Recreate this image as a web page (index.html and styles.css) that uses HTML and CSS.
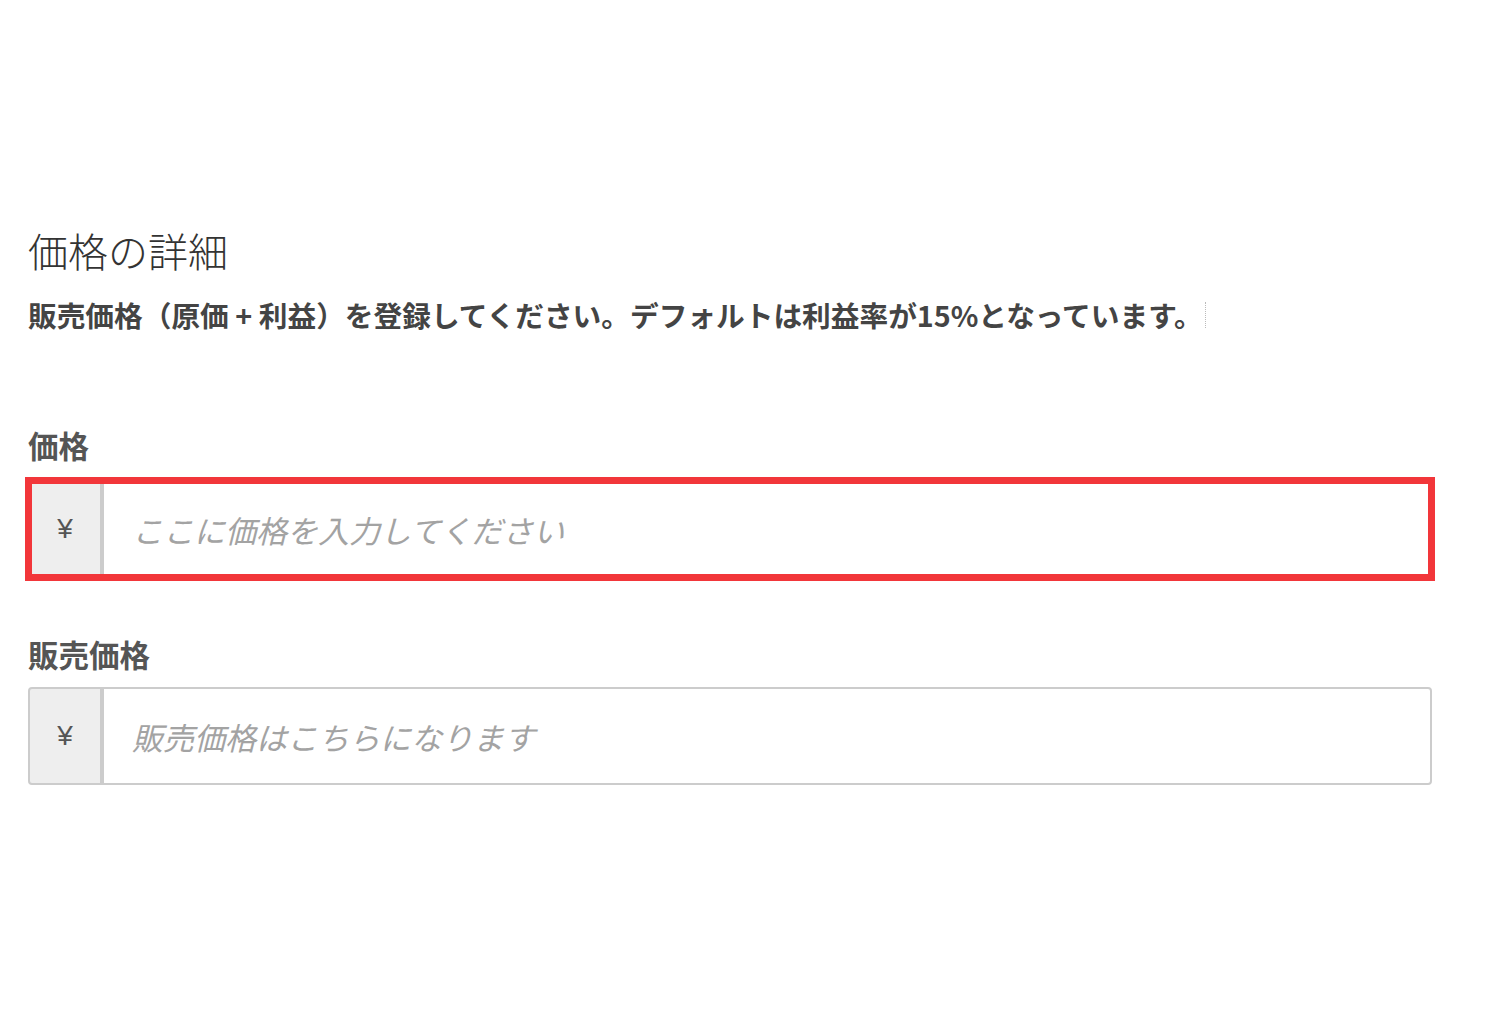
FILE: index.html
```html
<!DOCTYPE html>
<html>
<head>
  <title>価格の詳細</title>
  <link rel="stylesheet" href="styles.css">
</head>
<body>

  <div class="container">
    <h2 class="title">価格の詳細</h2>
    <p class="desc">販売価格（原価 + 利益）を登録してください。デフォルトは利益率が15%となっています。<span class="caret"></span></p>

    <form id="price-form">
      <label class="label" for="price">価格</label>
      <div class="input-group active">
        <span class="addon">¥</span>
        <input id="price" type="text" placeholder="ここに価格を入力してください">
      </div>

      <label class="label label-sale" for="sale-price">販売価格</label>
      <div class="input-group">
        <span class="addon">¥</span>
        <input id="sale-price" type="text" placeholder="販売価格はこちらになります" readonly>
      </div>
    </form>
  </div>

</body>
</html>
```

FILE: styles.css
```css
body {
  margin: 0;
  font-family: "Noto Sans CJK JP", sans-serif;
  color: #333;
  background: #fff;
}

.container {
  padding: 227px 68px 0 28px;
}

.title {
  margin: 0;
  font-size: 40px;
  line-height: 46px;
  font-weight: 300;
  color: #333;
}

.desc {
  margin: 22px 0 0;
  font-size: 28.7px;
  line-height: 40px;
  font-weight: bold;
  color: #444;
  display: flex;
  align-items: center;
}

.caret {
  display: inline-block;
  height: 26px;
  margin-left: 2px;
  border-left: 1px dotted #bbb;
}

.label {
  display: block;
  font-size: 30.5px;
  line-height: 40px;
  font-weight: bold;
  color: #555;
  margin-top: 90px;
}

.label-sale {
  margin-top: 56px;
}

.input-group {
  display: flex;
  height: 98px;
  margin-top: 15px;
}

.label-sale + .input-group {
  margin-top: 13px;
}

.addon {
  width: 74px;
  box-sizing: border-box;
  display: flex;
  align-items: center;
  justify-content: center;
  background-color: #eee;
  border: 2px solid #ccc;
  border-radius: 4px 0 0 4px;
  font-family: "Liberation Sans", sans-serif;
  font-size: 28px;
  color: #555;
}

.input-group input {
  flex: 1;
  min-width: 0;
  box-sizing: border-box;
  padding: 0 28px;
  border: 2px solid #ccc;
  border-radius: 0 4px 4px 0;
  font-family: "Noto Sans CJK JP", sans-serif;
  font-size: 31px;
  color: #333;
  outline: none;
}

.input-group input::placeholder {
  color: #a3a3a3;
  font-style: italic;
}

/* highlighted field */
.input-group.active {
  outline: 7px solid #f2363a;
  outline-offset: -4px;
}
```
